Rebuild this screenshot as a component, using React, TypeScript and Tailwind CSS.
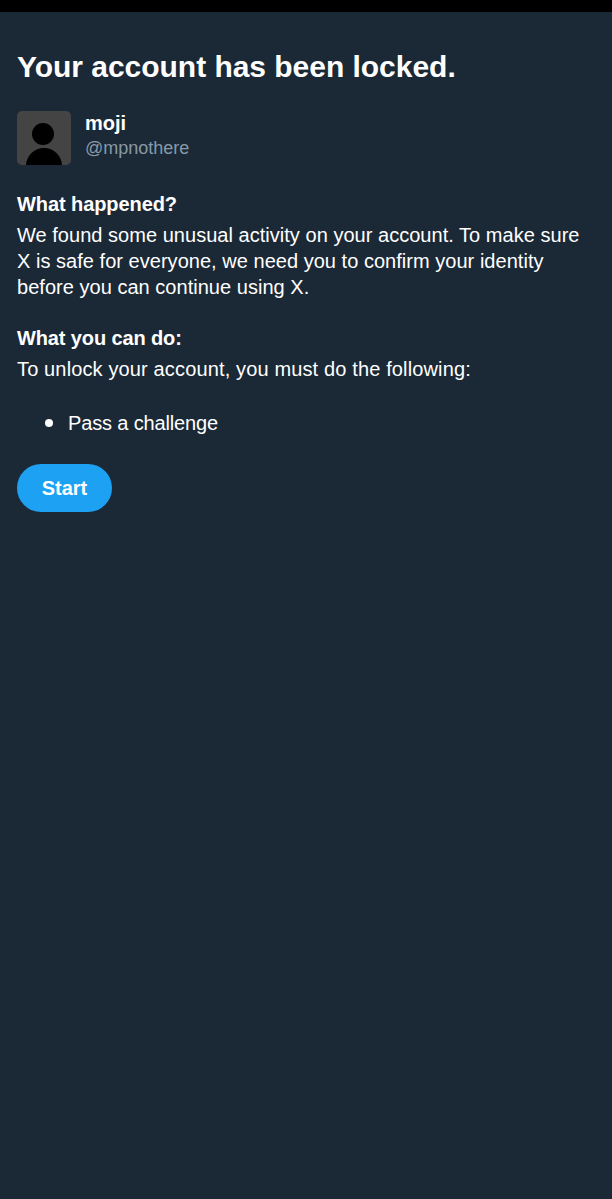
export default function App() {
  return (
    <div className="h-[1199px] w-[612px] overflow-hidden bg-[#1b2937] font-['Liberation_Sans',Arial,sans-serif] text-white">
      <div className="h-3 bg-black" />
      <div className="px-[17px] pt-[36px]">
        <h1 className="text-[30px] font-bold leading-[38px] tracking-[-0.03px]">Your account has been locked.</h1>
        <div className="mt-[25px] flex gap-[14px]">
          <div className="relative h-[54px] w-[54px] overflow-hidden rounded-[5px] bg-[#444444]">
            <div className="absolute left-[15px] top-[12px] size-[22px] rounded-full bg-black" />
            <div className="absolute left-[9px] top-[37px] h-[36px] w-[36px] rounded-full bg-black" />
          </div>
          <div>
            <div className="text-[20px] font-bold leading-[25px]">moji</div>
            <div className="text-[18px] leading-[25px] text-[#8899a6]">@mpnothere</div>
          </div>
        </div>
        <h2 className="mt-[26px] text-[20px] font-bold leading-[26px] tracking-[-0.08px]">What happened?</h2>
        <p className="mt-[5px] text-[20px] leading-[26px] tracking-[0.03px]">
          We found some unusual activity on your account. To make sure X is safe for everyone, we need you to confirm your identity before you can continue using X.
        </p>
        <h2 className="mt-[25px] text-[20px] font-bold leading-[26px] tracking-[-0.12px]">What you can do:</h2>
        <p className="mt-[5px] text-[20px] leading-[26px] tracking-[0.14px]">To unlock your account, you must do the following:</p>
        <ul className="mt-[28px] pl-[28px] text-[20px] leading-[26px] tracking-[-0.15px]">
          <li className="flex items-center gap-[15px]">
            <span className="size-[8px] rounded-full bg-white" />
            Pass a challenge
          </li>
        </ul>
        <button className="mt-[28px] h-[48px] w-[95px] rounded-full bg-[#1da1f2] text-[20px] font-bold">Start</button>
      </div>
    </div>
  )
}
